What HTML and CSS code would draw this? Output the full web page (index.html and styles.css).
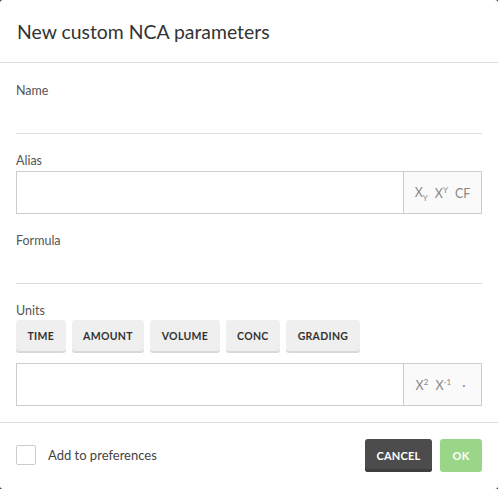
FILE: index.html
```html
<!DOCTYPE html>
<html>
<head>
<meta charset="utf-8">
<link rel="stylesheet" href="styles.css">
</head>
<body>
<div class="dialog">
  <div class="header">New custom NCA parameters</div>
  <div class="body">
    <div class="field">
      <div class="label">Name</div>
      <div class="underline"></div>
    </div>
    <div class="field">
      <div class="label">Alias</div>
      <div class="box">
        <div class="box-input"></div>
        <div class="addon"><span>X<sub>Y</sub></span><span>X<sup>Y</sup></span><span>CF</span></div>
      </div>
    </div>
    <div class="field">
      <div class="label">Formula</div>
      <div class="underline"></div>
    </div>
    <div class="field units">
      <div class="label">Units</div>
      <div class="chips">
        <button class="chip">TIME</button>
        <button class="chip">AMOUNT</button>
        <button class="chip">VOLUME</button>
        <button class="chip">CONC</button>
        <button class="chip">GRADING</button>
      </div>
      <div class="box">
        <div class="box-input"></div>
        <div class="addon"><span>X<sup>2</sup></span><span>X<sup>-1</sup></span><span class="dot">·</span></div>
      </div>
    </div>
  </div>
  <div class="footer">
    <label class="check"><span class="checkbox"></span>Add to preferences</label>
    <div class="actions">
      <button class="btn cancel">CANCEL</button>
      <button class="btn ok">OK</button>
    </div>
  </div>
</div>
</body>
</html>
```
FILE: styles.css
```css
html, body { margin: 0; padding: 0; background: #3a3a3a; }
body { font-family: Lato, "Liberation Sans", sans-serif; color: #333; }
.dialog {
  width: 498px; height: 489px; background: #fff; border-radius: 3px;
  display: flex; flex-direction: column; box-sizing: border-box;
}
.header {
  height: 63px; box-sizing: border-box; padding: 20px 16px 0 17px;
  font-size: 19.4px; color: #333; border-bottom: 1px solid #ddd;
}
.body { padding: 0 16px; flex: 1; }
.field { padding-top: 20px; }
.label { font-size: 12.5px; color: #555; line-height: 16px; }
.underline { height: 34px; border-bottom: 1px solid #ddd; }
.field + .field { padding-top: 19px; }
.box {
  margin-top: 2px; height: 43px; box-sizing: border-box; border: 1px solid #ccc;
  display: flex;
}
.box-input { flex: 1; }
.addon {
  width: 77px; background: #fafafa; border-left: 1px solid #ccc;
  display: flex; align-items: center; justify-content: center; gap: 7px;
  font-size: 12.5px; color: #888; padding-top: 2px;
}
.addon sub, .addon sup { font-size: 8px; }
.addon .dot { padding: 0 4px; }
.units .label { margin-bottom: 1px; }
.chips { display: flex; gap: 6px; }
.chip {
  height: 31px; padding: 0 11.5px; border: 0; border-radius: 3px;
  background: #efefef; box-shadow: 0 2px 0 #d9d9d9;
  font-family: inherit; font-weight: 700; font-size: 10.5px; letter-spacing: 0.3px; color: #333;
}
.units .box { margin-top: 12px; }
.footer {
  height: 67px; box-sizing: border-box; border-top: 1px solid #ddd;
  display: flex; align-items: center; justify-content: space-between; padding: 0 16px 2px;
}
.check { display: flex; align-items: center; font-size: 13px; color: #444; }
.checkbox {
  width: 18px; height: 18px; border: 1px solid #ccc; border-radius: 2px; margin-right: 12px;
}
.actions { display: flex; gap: 8px; }
.btn {
  height: 33px; border: 0; border-radius: 3px; font-family: inherit; font-weight: 700;
  font-size: 11px; letter-spacing: 0.2px; color: #fff;
}
.cancel { width: 67px; background: #4c4c4c; box-shadow: inset 0 -3px 0 #3e3e3e; }
.ok { width: 42px; background: #9ad688; }
```
